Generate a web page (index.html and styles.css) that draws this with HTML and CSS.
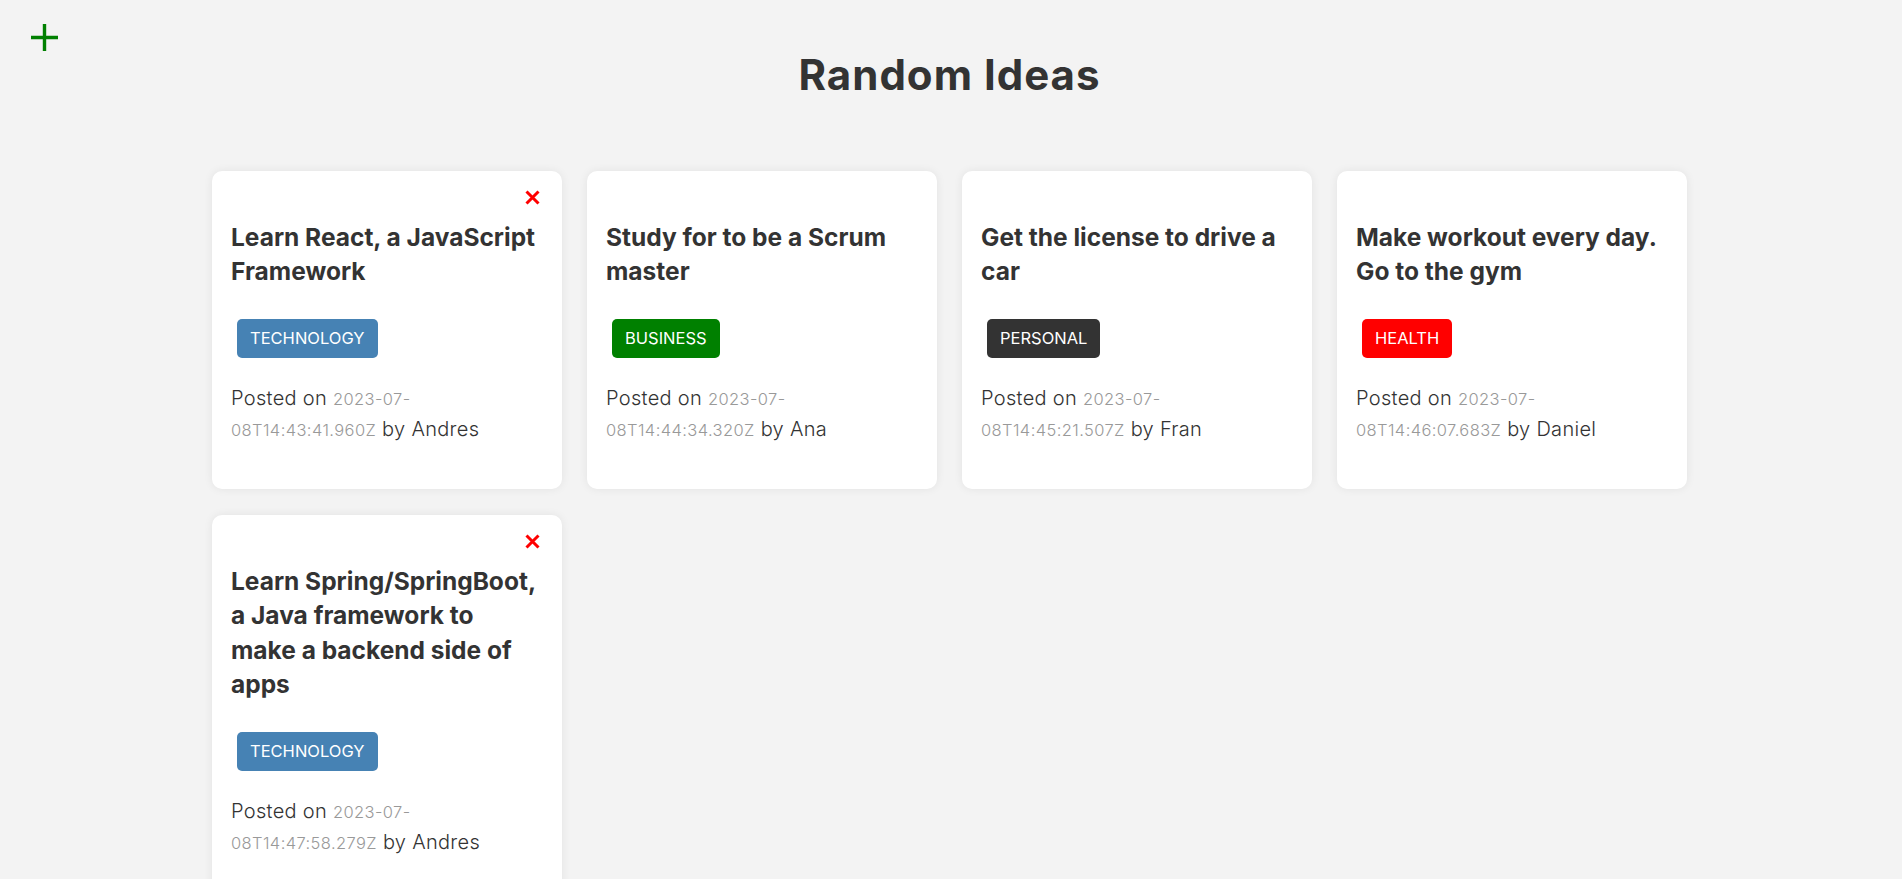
FILE: index.html
```html
<!DOCTYPE html>
<html lang="en">
<head>
<meta charset="UTF-8">
<title>Random Ideas</title>
<link rel="stylesheet" href="styles.css">
</head>
<body>
<button class="add-btn" aria-label="Add idea">
  <svg width="27" height="27" viewBox="0 0 27 27"><path d="M13.5 0v27M0 13.5h27" stroke="#008000" stroke-width="3.4" fill="none"/></svg>
</button>
<h1 class="page-title">Random Ideas</h1>
<main class="ideas">
  <article class="card">
    <button class="delete" aria-label="Delete"><svg width="15" height="15" viewBox="0 0 15 15"><path d="M1.5 1.5l12 12M13.5 1.5l-12 12" stroke="#ff0000" stroke-width="3" fill="none"/></svg></button>
    <h3 class="card-title">Learn React, a JavaScript Framework</h3>
    <div class="tag-row"><span class="tag tag-technology">Technology</span></div>
    <p class="meta">Posted on <span class="date">2023-07-<wbr>08T14:43:41.960Z</span> by <span class="author">Andres</span></p>
  </article>
  <article class="card">
    <h3 class="card-title">Study for to be a Scrum master</h3>
    <div class="tag-row"><span class="tag tag-business">Business</span></div>
    <p class="meta">Posted on <span class="date">2023-07-<wbr>08T14:44:34.320Z</span> by <span class="author">Ana</span></p>
  </article>
  <article class="card">
    <h3 class="card-title">Get the license to drive a car</h3>
    <div class="tag-row"><span class="tag tag-personal">Personal</span></div>
    <p class="meta">Posted on <span class="date">2023-07-<wbr>08T14:45:21.507Z</span> by <span class="author">Fran</span></p>
  </article>
  <article class="card">
    <h3 class="card-title">Make workout every day. Go to the gym</h3>
    <div class="tag-row"><span class="tag tag-health">Health</span></div>
    <p class="meta">Posted on <span class="date">2023-07-<wbr>08T14:46:07.683Z</span> by <span class="author">Daniel</span></p>
  </article>
  <article class="card">
    <button class="delete" aria-label="Delete"><svg width="15" height="15" viewBox="0 0 15 15"><path d="M1.5 1.5l12 12M13.5 1.5l-12 12" stroke="#ff0000" stroke-width="3" fill="none"/></svg></button>
    <h3 class="card-title">Learn Spring/SpringBoot, a Java framework to make a backend side of apps</h3>
    <div class="tag-row"><span class="tag tag-technology">Technology</span></div>
    <p class="meta">Posted on <span class="date">2023-07-<wbr>08T14:47:58.279Z</span> by <span class="author">Andres</span></p>
  </article>
</main>
</body>
</html>
```

FILE: styles.css
```css
* {
  box-sizing: border-box;
}

body {
  margin: 0;
  padding: 0 3px 0 0;
  background: #f3f3f3;
  color: #333;
  font-family: Inter, "Noto Sans", sans-serif;
}

.add-btn {
  display: block;
  margin: 24px 0 0 31px;
  width: 27px;
  height: 27px;
  padding: 0;
  border: none;
  background: none;
  cursor: pointer;
}

.add-btn svg {
  display: block;
}

.page-title {
  margin: 0;
  text-align: center;
  font-size: 42px;
  line-height: 48px;
  font-weight: 700;
  letter-spacing: 1px;
  color: #333;
}

.ideas {
  display: grid;
  grid-template-columns: repeat(4, 350px);
  column-gap: 25px;
  row-gap: 26px;
  width: 1475px;
  margin: 72px auto 0;
}

.card {
  position: relative;
  background: #fff;
  border-radius: 10px;
  box-shadow: 0 0 10px rgba(0, 0, 0, 0.07);
  padding: 20px 19px;
}

.delete {
  position: absolute;
  top: 19px;
  right: 22px;
  width: 15px;
  height: 15px;
  padding: 0;
  border: none;
  background: none;
  cursor: pointer;
}

.delete svg {
  display: block;
}

.card-title {
  margin: 28.75px 0 0;
  font-size: 24.5px;
  line-height: 34.5px;
  font-weight: 700;
  color: #333;
}

.tag-row {
  display: flex;
  margin-top: 30px;
}

.tag {
  margin-left: 6px;
  padding: 7px 13px;
  border-radius: 5px;
  color: #fff;
  font-size: 16.5px;
  line-height: 25px;
  text-transform: uppercase;
}

.tag-technology { background: #4682b4; }
.tag-business { background: #008000; }
.tag-personal { background: #333; }
.tag-health { background: #ff0000; }

.meta {
  margin: 25.7px 0 23.5px;
  font-size: 20px;
  line-height: 30px;
  font-weight: 300;
  letter-spacing: 0.3px;
  color: #333;
}

.date {
  font-size: 16.5px;
  letter-spacing: 0.4px;
  color: #999;
}
```
